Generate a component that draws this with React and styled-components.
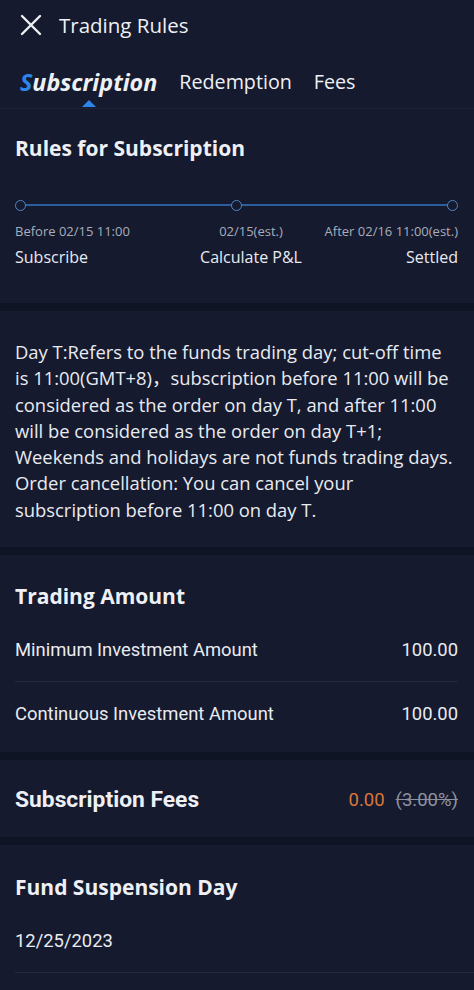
import React from "react";
import styled, { createGlobalStyle } from "styled-components";

const Global = createGlobalStyle`
  html, body { margin: 0; padding: 0; background: #0f1424; }
  body { font-family: "Open Sans", "Noto Sans", "Noto Sans CJK SC", sans-serif; color: #e9ebf1; }
  * { box-sizing: border-box; }
`;

const Page = styled.div`
  width: 474px;
  min-height: 990px;
  display: flex;
  flex-direction: column;
  gap: 8px;
  background: #0f1424;
`;

const Section = styled.section`
  background: #151a2e;
  padding: ${(p) => p.$pad || "0 16px"};
`;

const TopBar = styled.div`
  background: #151a2e;
  border-bottom: 1px solid #1d2339;
`;

const Header = styled.div`
  height: 50px;
  display: flex;
  align-items: center;
  gap: 17px;
  padding: 0 20px;
  font-size: 20.5px;
  color: #eef0f5;
`;

const Tabs = styled.div`
  display: flex;
  align-items: flex-end;
  gap: 22px;
  padding: 0 20px;
  height: 58px;
`;

const Tab = styled.div`
  position: relative;
  padding-bottom: 12px;
  font-size: ${(p) => (p.$active ? "23.3px" : "19.7px")};
  font-weight: ${(p) => (p.$active ? 700 : 400)};
  font-style: ${(p) => (p.$active ? "italic" : "normal")};
  color: #eef0f5;
  line-height: 28px;
  &::after {
    content: "";
    display: ${(p) => (p.$active ? "block" : "none")};
    position: absolute;
    left: 50%;
    bottom: 1px;
    transform: translateX(-50%);
    border-left: 7px solid transparent;
    border-right: 7px solid transparent;
    border-bottom: 7px solid #2b86ec;
  }
`;

const Accent = styled.span`
  color: #2b86ec;
`;

const Title = styled.h2`
  margin: 0 0 ${(p) => p.$below || "0"};
  font-size: ${(p) => p.$size || "21px"};
  font-weight: 700;
  line-height: 28px;
  color: #eef0f5;
`;

const Timeline = styled.div`
  position: relative;
  margin-top: 37px;
  height: 12px;
  display: flex;
  justify-content: space-between;
  align-items: center;
  &::before {
    content: "";
    position: absolute;
    left: 5px;
    right: 5px;
    top: 50%;
    height: 2px;
    margin-top: -1px;
    background: #2c5e9e;
  }
`;

const Dot = styled.span`
  position: relative;
  width: 11px;
  height: 11px;
  border-radius: 50%;
  border: 1.6px solid #4c87cc;
  background: #151a2e;
`;

const Steps = styled.div`
  display: grid;
  grid-template-columns: 1fr 1fr 1fr;
  margin-top: 10px;
`;

const Step = styled.div`
  display: flex;
  flex-direction: column;
  align-items: ${(p) => p.$align};
  padding-left: ${(p) => p.$shift || "0"};
  gap: 5px;
`;

const StepTime = styled.div`
  font-size: 13px;
  line-height: 20px;
  color: #a9aebb;
  white-space: nowrap;
`;

const StepLabel = styled.div`
  font-size: 16px;
  line-height: 22px;
  color: #e9ebf1;
  white-space: nowrap;
`;

const Para = styled.p`
  margin: 0;
  font-size: 18.4px;
  line-height: 26.3px;
  color: #e9ebf1;
`;

const Row = styled.div`
  height: ${(p) => p.$h || "64px"};
  display: flex;
  align-items: center;
  justify-content: space-between;
  font-family: Roboto, "Liberation Sans", sans-serif;
  font-size: 18.4px;
  color: #e9ebf1;
  border-bottom: ${(p) => (p.$line ? "1px solid #232a40" : "none")};
`;

const Fees = styled.div`
  display: flex;
  align-items: center;
  gap: 11px;
  font-family: Roboto, "Liberation Sans", sans-serif;
  font-size: 18.5px;
`;

const Price = styled.span`
  color: ${(p) => p.$color};
  text-decoration: ${(p) => (p.$strike ? "line-through" : "none")};
`;

const CloseIcon = () => (
  <svg width="22" height="22" viewBox="0 0 22 22" fill="none">
    <path d="M2 2L20 20M20 2L2 20" stroke="#eef0f5" strokeWidth="2.4" strokeLinecap="round" />
  </svg>
);

export default function App() {
  return (
    <>
      <Global />
      <Page>
        <TopBar>
          <Header>
            <CloseIcon />
            <span>Trading Rules</span>
          </Header>
          <Tabs>
            <Tab $active>
              <Accent>S</Accent>ubscription
            </Tab>
            <Tab>Redemption</Tab>
            <Tab>Fees</Tab>
          </Tabs>
        </TopBar>

        <Section $pad="25px 16px 35px 15px" style={{ marginTop: -8 }}>
          <Title>Rules for Subscription</Title>
          <Timeline>
            <Dot />
            <Dot />
            <Dot />
          </Timeline>
          <Steps>
            <Step $align="flex-start">
              <StepTime>Before 02/15 11:00</StepTime>
              <StepLabel>Subscribe</StepLabel>
            </Step>
            <Step $align="center" $shift="29px">
              <StepTime>02/15(est.)</StepTime>
              <StepLabel>Calculate P&amp;L</StepLabel>
            </Step>
            <Step $align="flex-end">
              <StepTime>After 02/16 11:00(est.)</StepTime>
              <StepLabel>Settled</StepLabel>
            </Step>
          </Steps>
        </Section>

        <Section $pad="28px 16px 24px 15px">
          <Para>
            Day T:Refers to the funds trading day; cut-off time is 11:00(GMT+8)，subscription before 11:00 will be
            considered as the order on day T, and after 11:00 will be considered as the order on day T+1; Weekends and
            holidays are not funds trading days. Order cancellation: You can cancel your subscription before 11:00 on
            day T.
          </Para>
        </Section>

        <Section $pad="27px 16px 7px 15px">
          <Title $below="8px">Trading Amount</Title>
          <Row $line>
            <span>Minimum Investment Amount</span>
            <span>100.00</span>
          </Row>
          <Row $h="63px">
            <span>Continuous Investment Amount</span>
            <span>100.00</span>
          </Row>
        </Section>

        <Section $pad="2px 16px 0 15px">
          <Row $h="75px">
            <Title $size="22.8px">Subscription Fees</Title>
            <Fees>
              <Price $color="#d9783c">0.00</Price>
              <Price $color="#8d92a0" $strike>(3.00%)</Price>
            </Fees>
          </Row>
        </Section>

        <Section $pad="28px 0 18px 15px" style={{ flex: 1 }}>
          <Title $below="8px">Fund Suspension Day</Title>
          <Row $line>
            <span>12/25/2023</span>
          </Row>
        </Section>
      </Page>
    </>
  );
}
